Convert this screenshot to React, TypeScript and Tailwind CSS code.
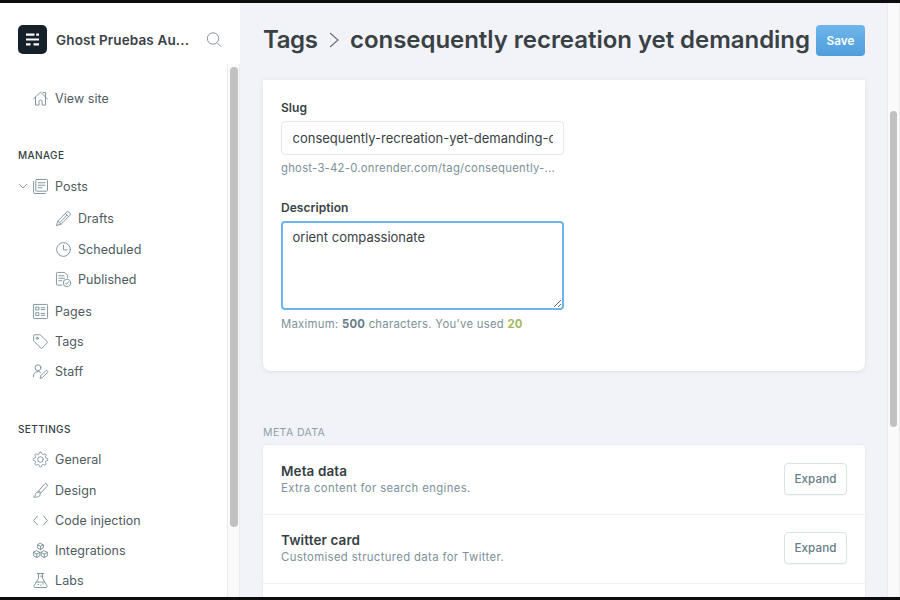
import React from "react";

// Eight-toothed cog outline, centred in a 24-unit box.
const cog =
  Array.from({ length: 96 }, (_, i) => {
    const a = (i / 96) * Math.PI * 2;
    const r = 10.2 + 1.5 * Math.tanh(2.2 * Math.cos(8 * a));
    return `${i ? "L" : "M"}${(12 + r * Math.sin(a)).toFixed(2)} ${(12 - r * Math.cos(a)).toFixed(2)}`;
  }).join("") + "Z";

const paths: Record<string, React.ReactNode> = {
  house: <path d="M1 12.500 12 1.800l11 10.700M4 10v12.500h5.500V17a2.500 2.500 0 0 1 5 0v5.500H20V10M16 2.500h4V9" />,
  posts: (
    <>
      <rect x="4.500" y=".8" width="18.700" height="18.700" rx="1.500" />
      <path d="M1 4v17.500A1.700 1.700 0 0 0 2.700 23.200H20M8.500 6h10.500M8.500 10h10.500M8.500 14h6" />
    </>
  ),
  pencil: (
    <path d="M1 23l1.800-7L17 1.900a2.600 2.600 0 0 1 3.700 0l1.400 1.400a2.600 2.600 0 0 1 0 3.700L8 21.200 1 23zM2.800 16 8 21.200M15 3.900 20.100 9M18 6.500 5.500 19" />
  ),
  clock: (
    <>
      <circle cx="12" cy="12" r="11" />
      <path d="M12 5v7.500h6" />
    </>
  ),
  published: (
    <>
      <path d="M9.500 21H2.200A1.500 1.500 0 0 1 .7 19.500V2.200A1.500 1.500 0 0 1 2.200.7H14l4.500 4.500v4M4.500 6h8M4.500 10h9M4.500 14h5" />
      <circle cx="17.500" cy="17.500" r="5.900" />
      <path d="m14.800 17.700 2 2 3.600-4.500" />
    </>
  ),
  pages: (
    <>
      <rect x=".7" y=".7" width="22.600" height="22.600" rx="1.300" />
      <path d="M5 5h4.500v4.500H5zM5 14h4.500v4.500H5zM13 6h6M13 9h6M13 15h6M13 18h6" />
    </>
  ),
  tag: (
    <>
      <path d="M1 3.200A2 2 0 0 1 3 1.200h7.500a2.500 2.500 0 0 1 1.700.7l10.300 10.300a1.700 1.700 0 0 1 0 2.300l-7.800 7.800a1.700 1.700 0 0 1-2.300 0L1.700 12a2.500 2.500 0 0 1-.7-1.700z" />
      <circle cx="6.700" cy="6.900" r="1.700" />
    </>
  ),
  staff: (
    <>
      <circle cx="8" cy="6" r="4.700" />
      <path d="M.7 20.500v-1.200A7.300 7.300 0 0 1 12 13.200M11.500 22.500l1-4 7.600-7.600a2 2 0 0 1 2.900 2.900l-7.600 7.600z" />
    </>
  ),
  gear: (
    <>
      <path d={cog} />
      <circle cx="12" cy="12" r="4.500" />
    </>
  ),
  brush: (
    <path d="M9 12.500 18.300 2a2.600 2.600 0 0 1 4 3.500L12.500 16M9 12.500l3.500 3.500M8 14.500c2 0 3.500 1.500 3.500 3.500 0 3.500-4 5-10.500 4.500 2-1 2.500-2.500 3-4.500.5-2.200 2-3.500 4-3.500z" />
  ),
  code: <path d="M7 5 1 12l6 7M17 5l6 7-6 7" />,
  cubes: (
    <>
      <path d="m12 .7 4.500 2.300v5L12 10.500 7.500 8V3zM7.500 3 12 5.300 16.500 3M12 5.300v5.200" />
      <path d="m6 12.500 5 2.500v5.500L6 23.200 1 20.500V15zM1 15l5 2.600 5-2.600M6 17.600v5.600" />
      <path d="m18 12.500 5 2.500v5.500l-5 2.700-5-2.700V15zM13 15l5 2.600 5-2.600M18 17.600v5.600" />
    </>
  ),
  flask: (
    <path d="M7 .8h10M8.800.8v8L1.700 20.300a1.900 1.900 0 0 0 1.600 2.900h17.400a1.900 1.900 0 0 0 1.600-2.900L15.200 8.800v-8M5.500 14.500h13M8 18.500h1M12 19.500h1M15.500 17.500h1M12 5h3" />
  ),
};

function Icon({ name }: { name: string }) {
  return (
    <svg
      viewBox="0 0 24 24"
      className="h-[15px] w-[15px] shrink-0 overflow-visible fill-none stroke-[#738a94] stroke-[1.4]"
      strokeLinecap="round"
      strokeLinejoin="round"
    >
      {paths[name]}
    </svg>
  );
}

function NavItem({
  icon,
  label,
  className,
  children,
}: {
  icon: string;
  label: string;
  className: string;
  children?: React.ReactNode;
}) {
  return (
    <a className={`flex shrink-0 items-center gap-[7px] whitespace-nowrap ${className}`}>
      {children}
      <Icon name={icon} />
      <span className="pt-[2px]">{label}</span>
    </a>
  );
}

function MetaRow({ title, text }: { title: string; text: string }) {
  return (
    <div className="flex h-[69px] shrink-0 items-center justify-between border-b border-[#ecf1f5] px-[18px]">
      <div>
        <h4 className="text-[13.500px] leading-[17px] font-semibold tracking-[0.1px] text-[#343f44]">{title}</h4>
        <p className="text-[11.300px] leading-[17px] tracking-[0.38px] text-[#7c909a]">{text}</p>
      </div>
      <button className="mb-[2px] h-8 w-[63px] rounded-[4px] border border-[#dae3e8] bg-white pt-[2px] text-[11.700px] font-medium tracking-[0.05px] text-[#667c87] shadow-[0_1px_1px_rgba(0,0,0,0.04)]">
        Expand
      </button>
    </div>
  );
}

export default function App() {
  return (
    <div className="flex h-[600px] w-[900px] overflow-hidden border-y-[3px] border-[#0d0d0f] bg-[#f2f3f8] font-['Inter',sans-serif] text-[#394145]">
      <aside className="flex w-[240px] shrink-0 flex-col bg-white">
        <header className="flex h-[61px] shrink-0 items-center pt-3 pl-[18px]">
          <svg viewBox="0 0 29 29" className="h-[29px] w-[29px] shrink-0">
            <rect width="29" height="29" rx="5" fill="#15212a" />
            <path
              d="M8 9.700h8.500M18.200 9.700h2.800M8 14.500h13M8 19.300h4.500M15.500 19.300H21"
              stroke="#fff"
              strokeWidth="2.200"
              fill="none"
            />
          </svg>
          <h1 className="ml-[9px] w-[150px] pt-[2px] text-[13.500px] font-semibold tracking-[0.13px] whitespace-nowrap">Ghost Pruebas Au...</h1>
          <svg viewBox="0 0 16 16" className="h-4 w-4 fill-none stroke-[#8296a0] stroke-1">
            <circle cx="7" cy="6.500" r="5.700" />
            <path d="m11.200 10.800 4 4" />
          </svg>
        </header>
        <div className="flex min-h-0 flex-1">
          <nav className="flex flex-1 flex-col pt-[19px] text-[12.500px] tracking-[0.060px] text-[#505b61]">
            <NavItem icon="house" label="View site" className="h-[31px] pl-[33px]" />
            <h5 className="mt-[31px] flex h-[21px] shrink-0 items-center pl-[18px] text-[10px] font-medium tracking-[0.380px] text-[#343f44]">MANAGE</h5>
            <NavItem icon="posts" label="Posts" className="mt-[5px] h-[30px] pl-[18px]">
              <svg viewBox="0 0 10 6" className="-mr-[2px] h-[6px] w-[10px] fill-none stroke-[#8fa1aa] stroke-1">
                <path d="m1 1 4 4 4-4" />
              </svg>
            </NavItem>
            <NavItem icon="pencil" label="Drafts" className="mt-[2px] h-[31px] pl-[56px]" />
            <NavItem icon="clock" label="Scheduled" className="h-[30px] pl-[56px]" />
            <NavItem icon="published" label="Published" className="h-[30px] pl-[56px]" />
            <NavItem icon="pages" label="Pages" className="mt-[2px] h-[30px] pl-[33px]" />
            <NavItem icon="tag" label="Tags" className="h-[30px] pl-[33px]" />
            <NavItem icon="staff" label="Staff" className="h-[31px] pl-[33px]" />
            <h5 className="mt-[32px] flex h-5 shrink-0 items-center pl-[18px] text-[10px] font-medium tracking-[0.380px] text-[#343f44]">SETTINGS</h5>
            <NavItem icon="gear" label="General" className="mt-[5px] h-[31px] pl-[33px]" />
            <NavItem icon="brush" label="Design" className="h-[30px] pl-[33px]" />
            <NavItem icon="code" label="Code injection" className="h-[30px] pl-[33px]" />
            <NavItem icon="cubes" label="Integrations" className="h-[30px] pl-[33px]" />
            <NavItem icon="flask" label="Labs" className="h-[30px] pl-[33px]" />
          </nav>
          <div className="w-[13px] border-x border-[#ebebeb] bg-[#fafafa] pt-[3px] pl-[2px]">
            <div className="h-[460px] w-2 rounded-full bg-[#c1c1c1]" />
          </div>
        </div>
      </aside>

      <main className="flex min-w-0 flex-1 flex-col overflow-hidden pr-[22px] pl-[23px]">
        <header className="flex h-[76px] shrink-0 items-center justify-between pb-[2px]">
          <h2 className="flex items-center pb-px text-[24px] leading-[30px] font-semibold tracking-[-0.040px] whitespace-nowrap">
            <span className="w-[54px] tracking-[-0.400px]">Tags</span>
            <svg viewBox="0 0 10 16" className="mr-[11px] ml-3 h-4 w-[10px] fill-none stroke-[#6b7478] stroke-[1.2]">
              <path d="m1 1 8 7-8 7" />
            </svg>
            <span>consequently recreation yet demanding</span>
          </h2>
          <button className="h-[31px] w-[49px] shrink-0 rounded-[4px] bg-gradient-to-b from-[#6fb5e9] to-[#4f9edd] pt-[3px] text-[11.700px] font-semibold tracking-[0.1px] text-white">
            Save
          </button>
        </header>

        <section className="flex h-[292px] shrink-0 flex-col rounded-b-[8px] border-t border-[#e8eef2] bg-white px-[18px] pt-[19px] shadow-[0_1px_4px_rgba(60,70,90,0.12)]">
          <label className="text-[12px] leading-[18px] font-semibold tracking-[0.05px]">Slug</label>
          <input
            readOnly
            className="mt-1 h-[34px] w-[283px] shrink-0 rounded-[4px] border border-[#e3eaee] px-[10.500px] text-[13px] outline-none"
            defaultValue="consequently-recreation-yet-demanding-c"
          />
          <p className="mt-[4px] text-[11.300px] leading-[18px] tracking-[0.250px] text-[#7c909a]">ghost-3-42-0.onrender.com/tag/consequently-...</p>
          <label className="mt-[22px] text-[12px] leading-[18px] font-semibold tracking-[0.05px]">Description</label>
          <textarea
            className="mt-1 block h-[89px] w-[283px] shrink-0 resize rounded-[4px] border-2 border-[#69b5ec] px-[9.500px] py-[4px] text-[13px] leading-[20px] outline-none"
            defaultValue="orient compassionate"
          />
          <p className="mt-[5px] text-[11.300px] leading-[18px] tracking-[0.28px] text-[#7c909a]">
            Maximum: <b className="font-bold text-[#667c87]">500</b> characters. You’ve used{" "}
            <b className="font-bold text-[#9fbb58]">20</b>
          </p>
        </section>

        <h5 className="mt-[52px] flex h-5 shrink-0 items-center text-[10.500px] tracking-[0.4px] text-[#8ea0a9]">META DATA</h5>
        <section className="mt-[2px] flex h-[200px] shrink-0 flex-col rounded-t-[4px] bg-white pt-px shadow-[0_0_2px_rgba(60,70,90,0.12)]">
          <MetaRow title="Meta data" text="Extra content for search engines." />
          <MetaRow title="Twitter card" text="Customised structured data for Twitter." />
        </section>
      </main>

      <div className="w-[13px] shrink-0 border-x border-[#ebebeb] bg-[#fafafa] pt-[108px] pl-[2px]">
        <div className="h-[316px] w-[7px] rounded-full bg-[#c1c1c1]" />
      </div>
    </div>
  );
}
